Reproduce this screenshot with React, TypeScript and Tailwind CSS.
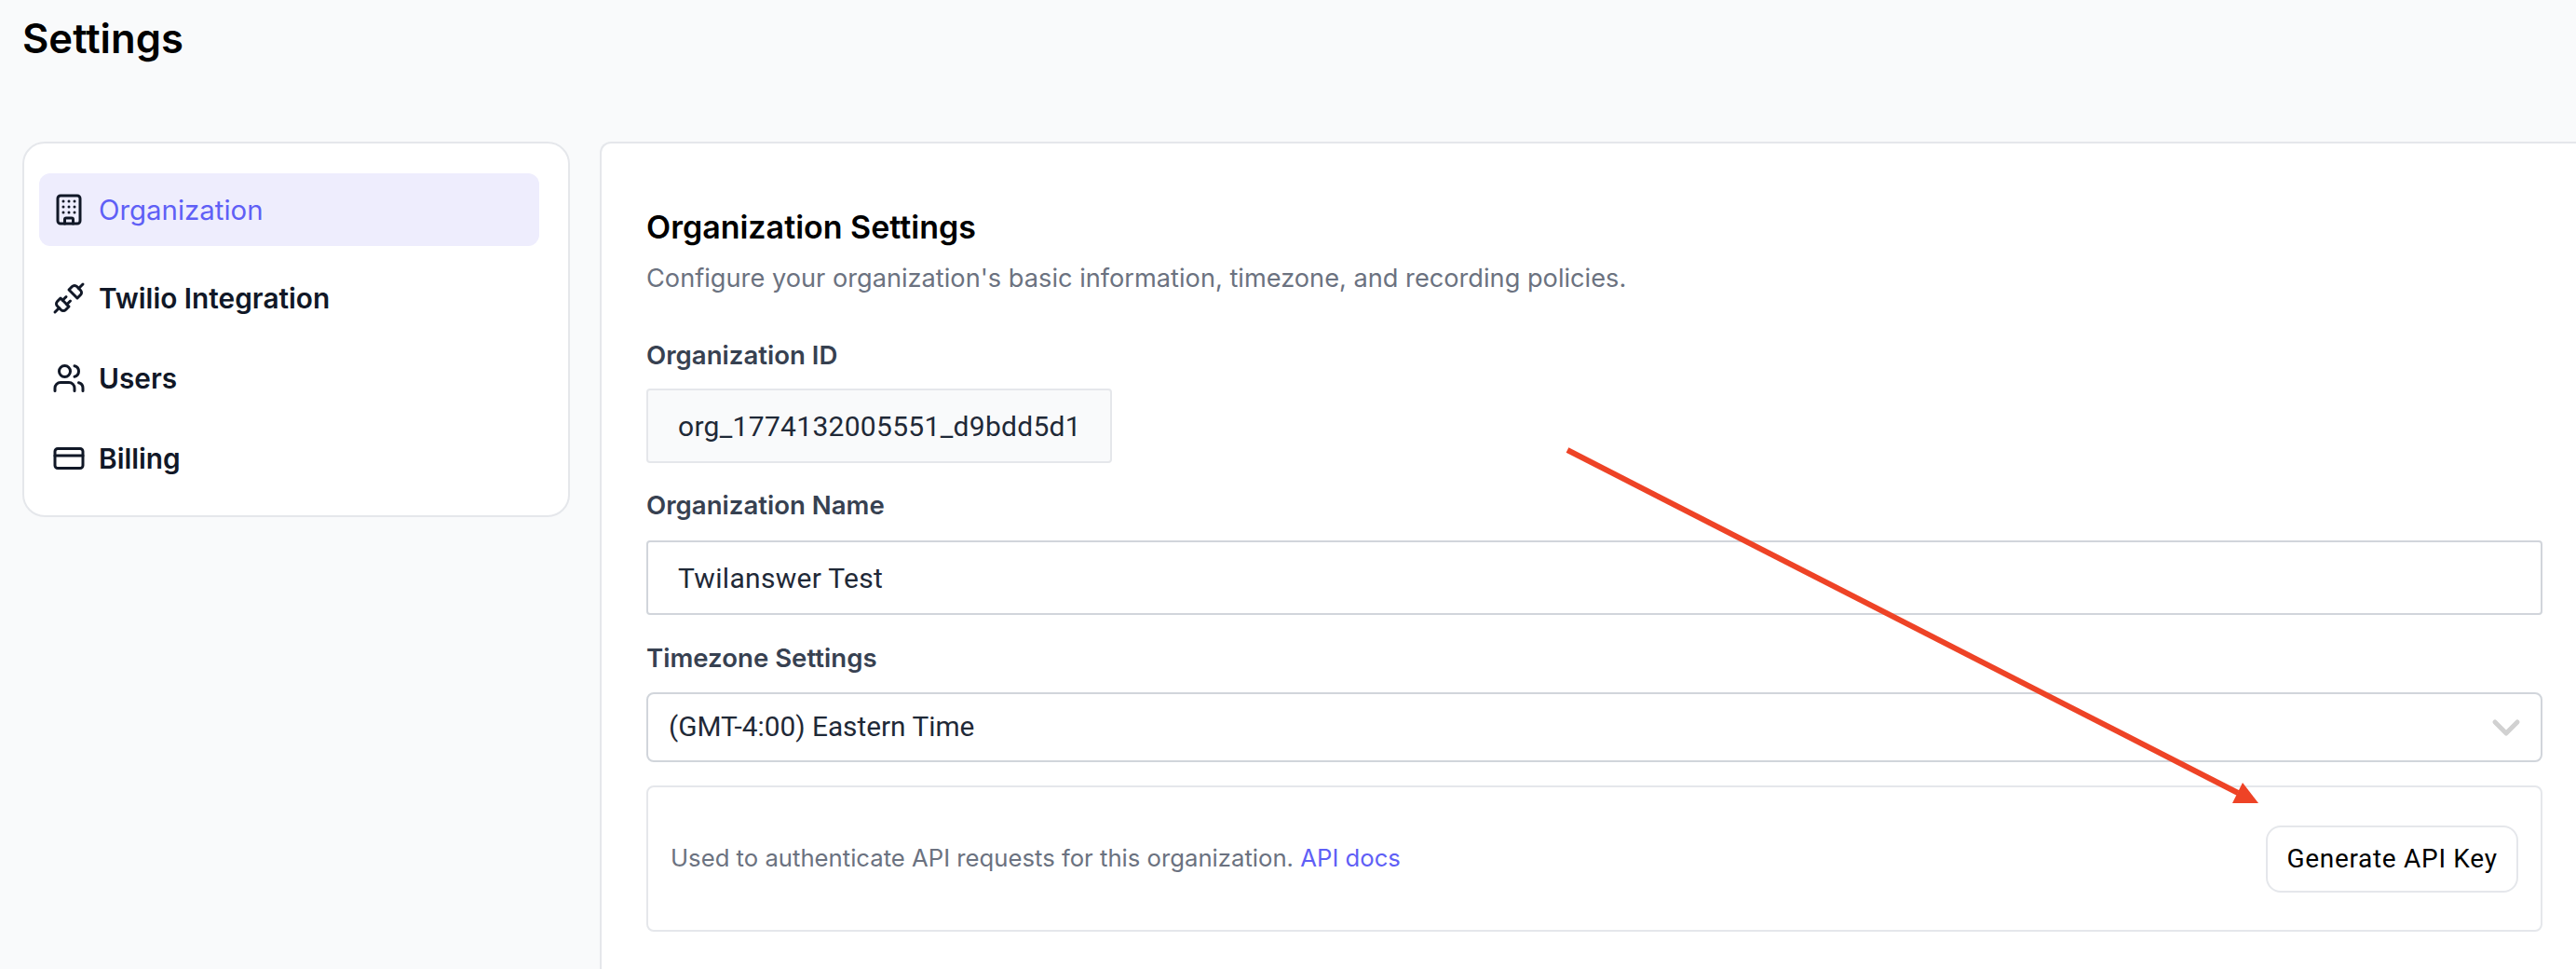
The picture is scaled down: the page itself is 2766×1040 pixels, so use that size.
import { Building, ChevronDown, CreditCard, Unplug, Users } from "lucide-react";

const inter = "font-['Inter',sans-serif]";
const roboto = "font-['Roboto',sans-serif]";

const navItems = [
  { label: "Twilio Integration", icon: Unplug },
  { label: "Users", icon: Users },
  { label: "Billing", icon: CreditCard },
];

const Sidebar = () => (
  <aside className="h-[403px] w-[588px] shrink-0 rounded-[24px] border-2 border-[#e5e7eb] bg-white pt-[32px] pr-[31px] pl-[16px]">
    <div className="flex h-[78px] items-center gap-[14px] rounded-[12px] bg-[#eeedfd] px-[14px] text-[29.4px] text-[#5f5ff6]">
      <Building size={36} color="#111827" strokeWidth={2} />
      <span className="pt-[2px]">Organization</span>
    </div>
    <div className="mt-[13px]">
      {navItems.map((item) => (
        <div key={item.label} className="flex h-[86px] items-center gap-[14px] px-[14px] text-[29.8px] font-semibold text-[#111827]">
          <item.icon size={36} color="#111827" strokeWidth={2} />
          <span>{item.label}</span>
        </div>
      ))}
    </div>
  </aside>
);

const Label = ({ children }: { children: string }) => (
  <div className="text-[27.6px] leading-[40px] font-semibold text-[#374151]">{children}</div>
);

const Panel = () => (
  <main className="h-[900px] min-w-0 flex-1 rounded-tl-[12px] border-t-2 border-l-2 border-[#e5e7eb] bg-white pt-[66px] pr-[36px] pl-[48px]">
    <h2 className="text-[34px] leading-[48px] font-semibold text-black">Organization Settings</h2>
    <p className="mt-[11px] text-[27.2px] leading-[40px] text-[#6b7280]">
      Configure your organization's basic information, timezone, and recording policies.
    </p>
    <div className="mt-[42px]"><Label>Organization ID</Label></div>
    <div className={`mt-[16px] flex h-[80px] w-[500px] items-center rounded-[4px] border-2 border-[#e5e7eb] bg-[#f9fafb] pl-[32px] text-[30px] tracking-[0.3px] text-[#1f2937] ${roboto}`}>
      org_1774132005551_d9bdd5d1
    </div>
    <div className="mt-[25px]"><Label>Organization Name</Label></div>
    <div className={`mt-[18px] flex h-[80px] items-center rounded-[4px] border-2 border-[#d1d5db] bg-white pl-[32px] text-[30px] tracking-[0.3px] text-[#1f2937] ${roboto}`}>
      Twilanswer Test
    </div>
    <div className="mt-[26px]"><Label>Timezone Settings</Label></div>
    <div className={`mt-[17px] flex h-[75px] items-center justify-between rounded-[8px] border-2 border-[#d1d5db] bg-white pr-[13px] pl-[22px] text-[29.8px] text-[#1f2937] ${roboto}`}>
      <span>(GMT-4:00) Eastern Time</span>
      <ChevronDown size={48} color="#d1d1d1" strokeWidth={2.5} />
    </div>
    <div className="mt-[25px] flex h-[157px] items-center justify-between rounded-[8px] border-2 border-[#e5e7eb] bg-white pr-[24px] pl-[24px]">
      <p className="text-[25.7px] text-[#6b7280]">
        Used to authenticate API requests for this organization. <span className="text-[#5f5ff6]">API docs</span>
      </p>
      <button className={`h-[72px] w-[271px] rounded-[16px] border-2 border-[#e5e7eb] bg-white text-[28px] tracking-[0.7px] text-black ${roboto}`}>
        Generate API Key
      </button>
    </div>
  </main>
);

export default function App() {
  return (
    <div className={`relative h-[1040px] w-full overflow-hidden bg-[#f9fafb] ${inter}`}>
      <h1 className="pt-[14px] pl-[24px] text-[43.6px] leading-[56px] font-semibold text-black">Settings</h1>
      <div className="mt-[82px] flex items-start gap-[32px] pl-[24px]">
        <Sidebar />
        <Panel />
      </div>
      <svg className="pointer-events-none absolute inset-0" width="2766" height="1040">
        <line x1="1683" y1="483" x2="2403" y2="851" stroke="#ee4326" strokeWidth="6" />
        <polygon points="2408,840 2397,862 2425,862" fill="#ee4326" />
      </svg>
    </div>
  );
}
